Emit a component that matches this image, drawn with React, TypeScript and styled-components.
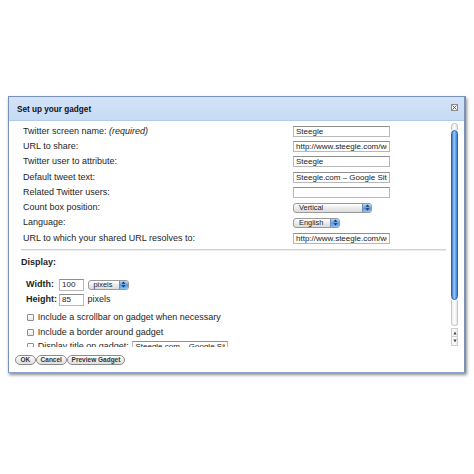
import React from "react";
import styled, { createGlobalStyle } from "styled-components";

const Global = createGlobalStyle`
  html, body { margin: 0; padding: 0; background: #fff; }
  body { font-family: "Liberation Sans", Arial, sans-serif; color: #1e1e1e; }
  * { box-sizing: border-box; }
`;

const Page = styled.div`
  width: 474px;
  height: 474px;
  padding: 96px 0 0 8px;
  background: #fff;
`;

const Dialog = styled.div`
  width: 458px;
  height: 277px;
  border: 1px solid #7891b6;
  border-right: 2px solid #7a91b3;
  border-bottom: 1px solid #8aa6cf;
  background: #fff;
  box-shadow: 1px 2px 3px rgba(0, 0, 0, 0.45);
  display: flex;
  flex-direction: column;
`;

const TitleBar = styled.div`
  height: 24px;
  flex: none;
  border-bottom: 1px solid #b3c9e8;
  background: linear-gradient(#d3e3f8, #c7dbf5);
  display: flex;
  align-items: center;
  justify-content: space-between;
  padding: 0 6px 0 8px;
`;

const Title = styled.div`
  font-family: "Liberation Sans", Arial, sans-serif;
  font-weight: bold;
  font-size: 8.2px;
  color: #111;
  margin-top: 1px;
`;

const CloseBox = styled.div`
  width: 7px;
  height: 7px;
  border: 1px solid #8c8c8c;
  background: #f4f4f4;
  display: flex;
  align-items: center;
  justify-content: center;
  margin-top: -2px;
`;

const Body = styled.div`
  height: 226px;
  flex: none;
  display: flex;
`;

const Content = styled.div`
  flex: 1;
  overflow: hidden;
  padding: 2.5px 0 0 14px;
`;

const FormGrid = styled.div`
  display: grid;
  grid-template-columns: 270px 97px;
  grid-auto-rows: 15.3px;
  align-items: center;
`;

const Label = styled.div`
  font-size: 9px;
  line-height: 11px;
  white-space: nowrap;
  color: #1e1e1e;
`;

const Req = styled.i`
  font-style: italic;
`;

const TextBox = styled.input<{ w?: number; h?: number }>`
  display: block;
  width: ${(p) => p.w ?? 97}px;
  height: ${(p) => p.h ?? 11}px;
  margin: 0;
  border: 1px solid #b8b8b8;
  border-top-color: #8e8e8e;
  border-radius: 0;
  outline: none;
  background: #fff;
  font-family: "Liberation Sans", Arial, sans-serif;
  font-size: 8px;
  line-height: 9px;
  padding: 0 2px;
  color: #222;
`;

const PopUp = styled.div<{ w: number }>`
  width: ${(p) => p.w}px;
  height: 10px;
  border: 1px solid #9a9a9a;
  border-radius: 3px;
  background: linear-gradient(#ffffff, #e8e8e8 60%, #dadada);
  display: flex;
  align-items: center;
  justify-content: space-between;
  overflow: hidden;
  font-size: 7.4px;
  line-height: 8px;
  color: #222;
`;

const PopText = styled.span`
  padding-left: 5px;
  white-space: nowrap;
`;

const PopCap = styled.span`
  width: 9px;
  height: 100%;
  flex: none;
  border-left: 1px solid #6f8fbf;
  background: linear-gradient(#b4d6f8, #5a98e4 55%, #8cc0f3);
  display: flex;
  align-items: center;
  justify-content: center;
`;

const Separator = styled.div`
  height: 1px;
  margin: 3px 5px 0 -2px;
  background: #d2d2d2;
  box-shadow: 0 1px 0 #ececec;
`;

const SectionTitle = styled.div`
  font-size: 9px;
  font-weight: bold;
  line-height: 11px;
  margin: 7px 0 0 -2px;
`;

const DimGrid = styled.div`
  display: grid;
  grid-template-columns: 33px auto;
  grid-auto-rows: 13px;
  row-gap: 2px;
  align-items: center;
  margin: 10.5px 0 0 3px;
`;

const DimLabel = styled.div`
  font-size: 9px;
  font-weight: bold;
  line-height: 11px;
`;

const DimCell = styled.div`
  display: flex;
  align-items: center;
  gap: 3.5px;
`;

const Unit = styled.span`
  font-size: 9px;
  line-height: 11px;
`;

const CheckList = styled.div`
  margin: 3.5px 0 0 4px;
  display: grid;
  grid-auto-rows: 14.8px;
  align-items: center;
`;

const CheckRow = styled.div`
  display: flex;
  align-items: center;
  gap: 3.7px;
  white-space: nowrap;
`;

const CheckBox = styled.span`
  width: 7px;
  height: 7px;
  flex: none;
  border: 1px solid #8d8d8d;
  border-radius: 1px;
  background: linear-gradient(#fff, #e9e9e9);
`;

const CheckText = styled.span`
  font-size: 9px;
  line-height: 11px;
`;

const ScrollBar = styled.div`
  width: 7px;
  flex: none;
  margin: 2px 6px 0 0;
  display: flex;
  flex-direction: column;
`;

const TrackTop = styled.div`
  height: 7px;
  border: 1px solid #c4c4c4;
  border-bottom: none;
  border-radius: 4px 4px 0 0;
  background: linear-gradient(to right, #e8e8e8, #fff, #e2e2e2);
`;

const Thumb = styled.div`
  height: 170px;
  border: 1px solid #2f64ad;
  border-radius: 4px;
  background: linear-gradient(to right, #3b78cf, #9ccaf7 45%, #5e9fe9 75%, #3f7fd6);
`;

const TrackRest = styled.div`
  height: 26px;
  border: 1px solid #c8c8c8;
  border-top: none;
  border-radius: 0 0 4px 4px;
  background: linear-gradient(to right, #ececec, #fff, #e6e6e6);
`;

const ArrowBtn = styled.div<{ first?: boolean }>`
  height: 9px;
  margin-top: ${(p) => (p.first ? 2 : 0)}px;
  border: 1px solid #cfcfcf;
  border-top: ${(p) => (p.first ? "1px solid #cfcfcf" : "none")};
  background: linear-gradient(to right, #f0f0f0, #fff, #ececec);
  display: flex;
  align-items: center;
  justify-content: center;
`;

const Footer = styled.div`
  flex: 1;
  display: flex;
  align-items: flex-start;
  padding: 8px 0 0 6px;
`;

const Pill = styled.button<{ w: number }>`
  width: ${(p) => p.w}px;
  height: 10px;
  padding: 0;
  margin: 0;
  border: 1px solid #8c8c8c;
  border-radius: 6px;
  background: linear-gradient(#ffffff, #ececec 55%, #dedede);
  font-family: "Liberation Sans", Arial, sans-serif;
  font-weight: bold;
  font-size: 6.5px;
  line-height: 8px;
  color: #333;
  display: flex;
  align-items: center;
  justify-content: center;
`;

const Updown = () => (
  <svg width="5" height="7" viewBox="0 0 5 7">
    <path d="M2.5 0.5 L4.5 2.8 L0.5 2.8 Z" fill="#1d2f55" />
    <path d="M2.5 6.5 L4.5 4.2 L0.5 4.2 Z" fill="#1d2f55" />
  </svg>
);

const Select = ({ w, label }: { w: number; label: string }) => (
  <PopUp w={w}>
    <PopText>{label}</PopText>
    <PopCap>
      <Updown />
    </PopCap>
  </PopUp>
);

const Field = ({ value, w, h }: { value?: string; w?: number; h?: number }) => (
  <TextBox readOnly value={value ?? ""} w={w} h={h} />
);

const rows: { label: React.ReactNode; field: React.ReactNode }[] = [
  {
    label: (
      <>
        Twitter screen name: <Req>(required)</Req>
      </>
    ),
    field: <Field value="Steegle" />,
  },
  { label: "URL to share:", field: <Field value="http://www.steegle.com/websites/google-sites" /> },
  { label: "Twitter user to attribute:", field: <Field value="Steegle" /> },
  { label: "Default tweet text:", field: <Field value="Steegle.com – Google Sites Tips" /> },
  { label: "Related Twitter users:", field: <Field /> },
  { label: "Count box position:", field: <Select w={79} label="Vertical" /> },
  { label: "Language:", field: <Select w={47} label="English" /> },
  {
    label: "URL to which your shared URL resolves to:",
    field: <Field value="http://www.steegle.com/websites/google-sites" />,
  },
];

export default function App() {
  return (
    <>
      <Global />
      <Page>
        <Dialog>
          <TitleBar>
            <Title>Set up your gadget</Title>
            <CloseBox>
              <svg width="5" height="5" viewBox="0 0 5 5">
                <path d="M0.5 0.5 L4.5 4.5 M4.5 0.5 L0.5 4.5" stroke="#555" strokeWidth="0.9" />
              </svg>
            </CloseBox>
          </TitleBar>
          <Body>
            <Content>
              <FormGrid>
                {rows.map((r, i) => (
                  <React.Fragment key={i}>
                    <Label>{r.label}</Label>
                    {r.field}
                  </React.Fragment>
                ))}
              </FormGrid>
              <Separator />
              <SectionTitle>Display:</SectionTitle>
              <DimGrid>
                <DimLabel>Width:</DimLabel>
                <DimCell>
                  <Field value="100" w={25} h={12} />
                  <Select w={41} label="pixels" />
                </DimCell>
                <DimLabel>Height:</DimLabel>
                <DimCell>
                  <Field value="85" w={25} h={12} />
                  <Unit>pixels</Unit>
                </DimCell>
              </DimGrid>
              <CheckList>
                <CheckRow>
                  <CheckBox />
                  <CheckText>Include a scrollbar on gadget when necessary</CheckText>
                </CheckRow>
                <CheckRow>
                  <CheckBox />
                  <CheckText>Include a border around gadget</CheckText>
                </CheckRow>
                <CheckRow>
                  <CheckBox />
                  <CheckText>Display title on gadget:</CheckText>
                  <Field value="Steegle.com – Google Sites Tips" w={96} />
                </CheckRow>
              </CheckList>
            </Content>
            <ScrollBar>
              <TrackTop />
              <Thumb />
              <TrackRest />
              <ArrowBtn first>
                <svg width="4" height="4" viewBox="0 0 4 4">
                  <path d="M2 0.5 L3.6 3.5 L0.4 3.5 Z" fill="#444" />
                </svg>
              </ArrowBtn>
              <ArrowBtn>
                <svg width="4" height="4" viewBox="0 0 4 4">
                  <path d="M2 3.5 L3.6 0.5 L0.4 0.5 Z" fill="#444" />
                </svg>
              </ArrowBtn>
            </ScrollBar>
          </Body>
          <Footer>
            <Pill w={20.5}>OK</Pill>
            <Pill w={31.5}>Cancel</Pill>
            <Pill w={58}>Preview Gadget</Pill>
          </Footer>
        </Dialog>
      </Page>
    </>
  );
}
